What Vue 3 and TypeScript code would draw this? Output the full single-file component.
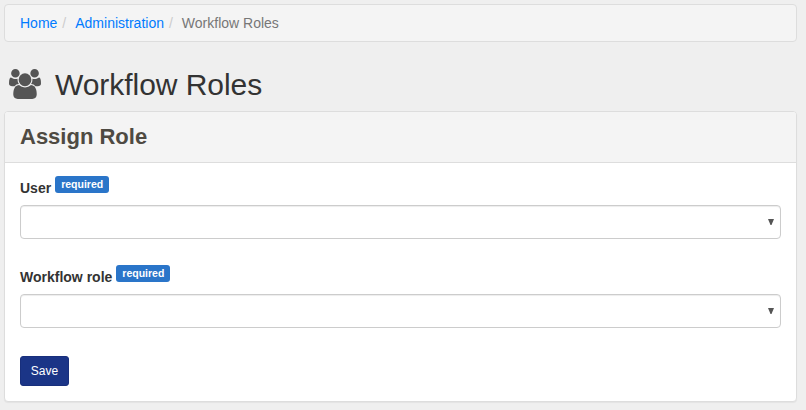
<script setup lang="ts">
interface Crumb {
  label: string
  href?: string
}

interface Field {
  id: string
  label: string
}

const crumbs: Crumb[] = [
  { label: 'Home', href: '#' },
  { label: 'Administration', href: '#' },
  { label: 'Workflow Roles' },
]

const fields: Field[] = [
  { id: 'user', label: 'User' },
  { id: 'workflow-role', label: 'Workflow role' },
]
</script>

<template>
  <div class="page">
    <ol class="breadcrumb">
      <li v-for="crumb in crumbs" :key="crumb.label">
        <a v-if="crumb.href" :href="crumb.href">{{ crumb.label }}</a>
        <span v-else>{{ crumb.label }}</span>
      </li>
    </ol>

    <h1 class="title">
      <svg class="title-icon" viewBox="0 -256 1920 1792" aria-hidden="true">
        <path
          d="M593 640q-162 5-265 128h-134q-82 0-138-40.500t-56-118.500q0-353 124-353 6 0 43.500 21t97.500 42.500 119 21.500q67 0 133-23-5 37-5 66 0 139 81 256zm1071 637q0 120-73 189.500t-194 69.500h-874q-121 0-194-69.500t-73-189.500q0-53 3.500-103.500t14-109 26.500-108.500 43-97.500 62-81 85.500-53.500 111.500-20q10 0 43 21.500t73 48 107 48 135 21.500 135-21.500 107-48 73-48 43-21.500q61 0 111.500 20t85.500 53.500 62 81 43 97.500 26.500 108.500 14 109 3.500 103.500zm-1024-1277q0 106-75 181t-181 75-181-75-75-181 75-181 181-75 181 75 75 181zm704 384q0 159-112.500 271.500t-271.500 112.500-271.500-112.500-112.500-271.500 112.500-271.500 271.500-112.500 271.500 112.500 112.500 271.500zm576 225q0 78-56 118.500t-138 40.500h-134q-103-123-265-128 81-117 81-256 0-29-5-66 66 23 133 23 59 0 119-21.500t97.500-42.500 43.500-21q124 0 124 353zm-128-609q0 106-75 181t-181 75-181-75-75-181 75-181 181-75 181 75 75 181z"
        />
      </svg>
      <span>Workflow Roles</span>
    </h1>

    <section class="panel">
      <header class="panel-heading">
        <h2>Assign Role</h2>
      </header>
      <form class="panel-body" @submit.prevent>
        <div v-for="field in fields" :key="field.id" class="form-group">
          <label :for="field.id">
            <span>{{ field.label }}</span>
            <span class="badge">required</span>
          </label>
          <div class="select">
            <select :id="field.id"></select>
            <svg class="caret" viewBox="0 0 6 6" aria-hidden="true">
              <path d="M0 0h6L3.500 6h-1z" />
            </svg>
          </div>
        </div>
        <button class="save" type="submit">Save</button>
      </form>
    </section>
  </div>
</template>

<style>
body {
  margin: 0;
  background: #efefef;
}
</style>

<style scoped>
.page,
.page * {
  box-sizing: border-box;
}

.page {
  min-height: 410px;
  padding: 4px 9px 0 4px;
  background: #efefef;
  font-family: "Liberation Sans", Arial, sans-serif;
  font-size: 14px;
  line-height: 20px;
  color: #333;
}

.breadcrumb {
  display: flex;
  height: 38px;
  margin: 0;
  padding: 8px 15px;
  list-style: none;
  background: #f4f4f4;
  border: 1px solid #ddd;
  border-radius: 4px;
}

.breadcrumb li + li::before {
  content: "/";
  padding: 0 9px 0 5px;
  color: #ccc;
}

.breadcrumb a {
  color: #007bff;
  text-decoration: none;
}

.breadcrumb span {
  color: #777;
}

.title {
  display: flex;
  align-items: flex-start;
  gap: 14px;
  height: 33px;
  margin: 26px 0 10px;
  padding-left: 5px;
  font-size: 30px;
  font-weight: 400;
  line-height: 33px;
  letter-spacing: -0.05px;
}

.title-icon {
  width: 32px;
  height: 30px;
  margin-top: 1px;
  fill: #555;
}

.panel {
  height: 291px;
  background: #fff;
  border: 1px solid #ddd;
  border-radius: 4px;
  box-shadow: 0 1px 1px rgba(0, 0, 0, 0.05);
}

.panel-heading {
  height: 51px;
  padding: 12px 15px;
  background: #f4f4f4;
  border-bottom: 1px solid #ddd;
  border-radius: 3px 3px 0 0;
}

.panel-heading h2 {
  margin: 0;
  font-size: 22px;
  font-weight: 700;
  line-height: 26px;
  color: #4e4a42;
}

.panel-body {
  padding: 13px 15px 15px;
}

.form-group {
  height: 89px;
}

.form-group label {
  display: flex;
  gap: 4px;
  height: 29px;
  font-weight: 700;
}

.form-group label > span:first-child {
  padding-top: 2px;
}

.badge {
  height: 17px;
  padding: 0 6px;
  border-radius: 3px;
  background: #2a75c9;
  color: #fff;
  font-size: 10.5px;
  line-height: 17px;
}

.select {
  position: relative;
  height: 34px;
}

.select select {
  display: block;
  width: 100%;
  height: 34px;
  margin: 0;
  appearance: none;
  background: #fff;
  border: 1px solid #ccc;
  border-radius: 4px;
  box-shadow: inset 0 1px 1px rgba(0, 0, 0, 0.075);
}

.caret {
  position: absolute;
  top: 14px;
  right: 7px;
  width: 6px;
  height: 6px;
  fill: #555;
}

.save {
  display: block;
  width: 49px;
  height: 30px;
  margin: 2px 0 0;
  padding: 0;
  border: 1px solid #182f7c;
  border-radius: 3px;
  background: #1b3587;
  color: #fff;
  font: 12px/18px "Liberation Sans", Arial, sans-serif;
}
</style>
